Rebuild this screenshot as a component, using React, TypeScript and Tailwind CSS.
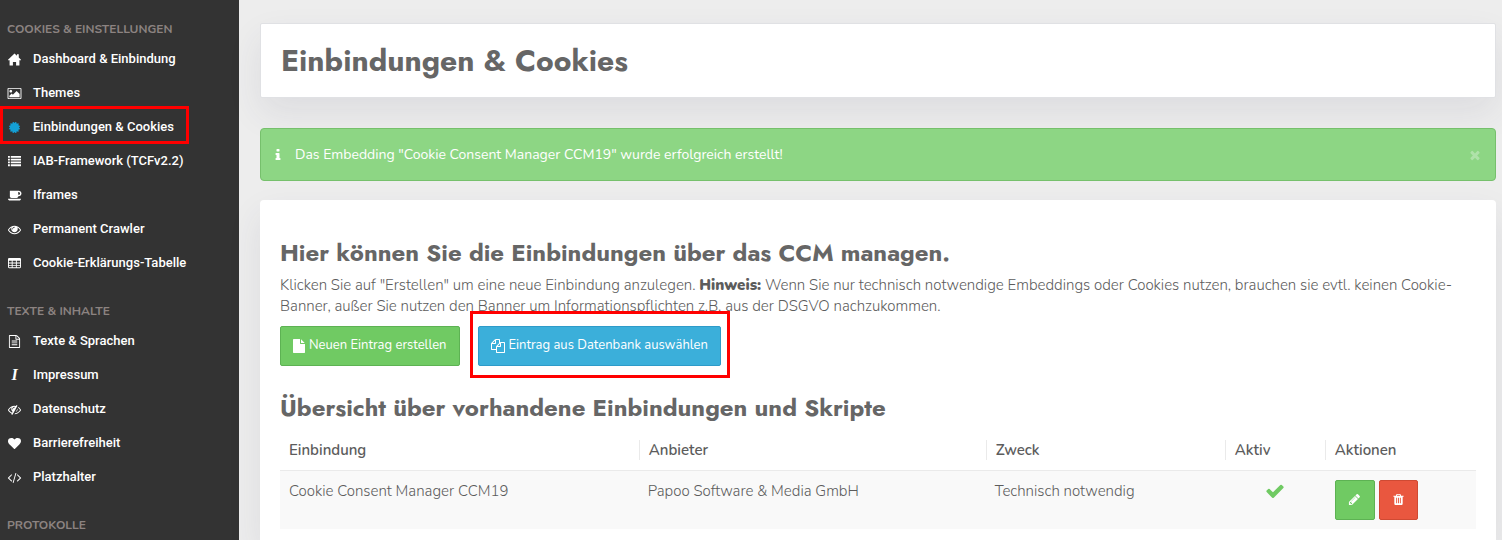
import type { ReactNode } from "react";

const paths = {
    home: "M896 60l340 325v-205h250v445l306 291v90h-220v686q0 40-40 40h-416v-506h-440v506h-416q-40 0-40-40v-686h-220v-90z",
    picture: "M576 576q0 80-56 136t-136 56-136-56-56-136 56-136 136-56 136 56 56 136zm1024 384v448h-1408v-192l320-320 160 160 512-512zm96-704h-1600q-13 0-22.5 9.5t-9.5 22.5v1216q0 13 9.5 22.5t22.5 9.5h1600q13 0 22.5-9.5t9.5-22.5v-1216q0-13-9.5-22.5t-22.5-9.5zm160 32v1216q0 66-47 113t-113 47h-1600q-66 0-113-47t-47-113v-1216q0-66 47-113t113-47h1600q66 0 113 47t47 113z",
    certificate: "M1504 896l138 135q30 28 20 70-12 41-52 51l-188 48 53 186q12 41-19 70-29 31-70 19l-186-53-48 188q-10 40-51 52-12 2-19 2-31 0-51-22l-135-138-135 138q-28 30-70 20-41-11-51-52l-48-188-186 53q-41 12-70-19-31-29-19-70l53-186-188-48q-40-10-52-51-10-42 20-70l138-135-138-135q-30-28-20-70 12-41 52-51l188-48-53-186q-12-41 19-70 29-31 70-19l186 53 48-188q10-41 51-51 41-12 70 19l135 139 135-139q29-30 70-19 41 10 51 51l48 188 186-53q41-12 70 19 31 29 19 70l-53 186 188 48q40 10 52 51 10 42-20 70z",
    list: "M0 1280h256v256H0zM0 896h256v256H0zM0 512h256v256H0zM384 1280h1408v256H384zM0 128h256v256H0zM384 896h1408v256H384zM384 512h1408v256H384zM384 128h1408v256H384z",
    coffee: "M1664 608q0-80-56-136t-136-56h-64v384h64q80 0 136-56t56-136zm-1664 736h1792q0 106-75 181t-181 75h-1280q-106 0-181-75t-75-181zm1856-736q0 159-112.5 271.5t-271.5 112.5h-64v32q0 92-66 158t-158 66h-704q-92 0-158-66t-66-158v-736q0-26 19-45t45-19h1152q159 0 271.5 112.5t112.5 271.5z",
    eye: "M1664 960q-152-236-381-353 61 104 61 225 0 185-131.5 316.5t-316.5 131.5-316.5-131.5-131.5-316.5q0-121 61-225-229 117-381 353 133 205 333.5 326.5t434.5 121.5 434.5-121.5 333.5-326.5zm-720-384q0-20-14-34t-34-14q-125 0-214.5 89.5t-89.5 214.5q0 20 14 34t34 14 34-14 14-34q0-86 61-147t147-61q20 0 34-14t14-34zm848 384q0 34-20 69-140 230-376.5 368.5t-499.5 138.5-499.5-139-376.5-368q-20-35-20-69t20-69q140-229 376.5-368t499.5-139 499.5 139 376.5 368q20 35 20 69z",
    eyeSlash: "M555 1335l78-141q-87-63-136-159t-49-203q0-121 61-225-229 117-381 353 167 258 427 375zm389-759q0-20-14-34t-34-14q-125 0-214.5 89.5t-89.5 214.5q0 20 14 34t34 14 34-14 14-34q0-86 61-147t147-61q20 0 34-14t14-34zm363-191q0 7-1 9-106 189-316 567t-315 566l-49 89q-10 16-28 16-12 0-134-70-16-10-16-28 0-12 44-87-143-65-263.500-173t-208.500-245q-20-31-20-69t20-69q153-235 380-371t496-136q89 0 180 17l54-97q10-16 28-16 5 0 18 6t31 15.500 33 18.500 31.500 18.500 19.500 11.500q16 10 16 27zm37 447q0 139-79 253.500t-209 164.500l280-502q8 45 8 84zm448 128q0 35-20 69-39 64-109 145-150 172-347.500 267t-419.500 95l74-132q212-18 392.500-137t301.500-307q-115-179-282-294l63-112q95 64 182.500 153t144.500 184q20 34 20 69z",
    table: "M160 128h1472q160 0 160 160v1088q0 160-160 160H160q-160 0-160-160V288q0-160 160-160zM128 512v256h384V512zm512 0v256h448V512zm576 0v256h448V512zM128 896v192h384V896zm512 0v192h448V896zm576 0v192h448V896zM128 1216v192h384v-192zm512 0v192h448v-192zm576 0v192h448v-192z",
    fileText: "M1596 380q28 28 48 76t20 88v1152q0 40-28 68t-68 28h-1344q-40 0-68-28t-28-68v-1600q0-40 28-68t68-28h896q40 0 88 20t76 48zm-444-244v376h376q-10-29-22-41l-313-313q-12-12-41-22zm384 1528v-1024h-416q-40 0-68-28t-28-68v-416h-768v1536h1280zm-1024-864q0-14 9-23t23-9h704q14 0 23 9t9 23v64q0 14-9 23t-23 9h-704q-14 0-23-9t-9-23v-64zm736 224q14 0 23 9t9 23v64q0 14-9 23t-23 9h-704q-14 0-23-9t-9-23v-64q0-14 9-23t23-9h704zm0 256q14 0 23 9t9 23v64q0 14-9 23t-23 9h-704q-14 0-23-9t-9-23v-64q0-14 9-23t23-9h704z",
    heart: "M896 1664q-26 0-44-18l-624-602q-10-8-27.500-26t-55.500-65.500-68-97.500-53.500-121-23.500-138q0-220 127-344t351-124q62 0 126.500 21.500t120 58 95.500 68.500 76 68q36-36 76-68t95.500-68.500 120-58 126.500-21.500q224 0 351 124t127 344q0 221-229 450l-623 600q-18 18-44 18z",
    code: "M553 1399l-50 50q-10 10-23 10t-23-10l-466-466q-10-10-10-23t10-23l466-466q10-10 23-10t23 10l50 50q10 10 10 23t-10 23l-393 393 393 393q10 10 10 23t-10 23zm591-1067l-373 1291q-4 13-15.500 19.500t-23.500 2.500l-62-17q-13-4-19.500-15.500t-2.500-24.500l373-1291q4-13 15.500-19.500t23.500-2.500l62 17q13 4 19.500 15.500t2.500 24.500zm657 651l-466 466q-10 10-23 10t-23-10l-50-50q-10-10-10-23t10-23l393-393-393-393q-10-10-10-23t10-23l50-50q10-10 23-10t23 10l466 466q10 10 10 23t-10 23z",
    info: "M1216 1344v128q0 26-19 45t-45 19h-512q-26 0-45-19t-19-45v-128q0-26 19-45t45-19h64v-384h-64q-26 0-45-19t-19-45v-128q0-26 19-45t45-19h384q26 0 45 19t19 45v576h64q26 0 45 19t19 45zm-128-1152v192q0 26-19 45t-45 19h-256q-26 0-45-19t-19-45v-192q0-26 19-45t45-19h256q26 0 45 19t19 45z",
    times: "M1490 1322q0 40-28 68l-136 136q-28 28-68 28t-68-28l-294-294-294 294q-28 28-68 28t-68-28l-136-136q-28-28-28-68t28-68l294-294-294-294q-28-28-28-68t28-68l136-136q28-28 68-28t68 28l294 294 294-294q28-28 68-28t68 28l136 136q28 28 28 68t-28 68l-294 294 294 294q28 28 28 68z",
    file: "M1152 512v-472q22 14 36 28l408 408q14 14 28 36h-472zm-128 32q0 40 28 68t68 28h544v1056q0 40-28 68t-68 28h-1344q-40 0-68-28t-28-68v-1600q0-40 28-68t68-28h800v544z",
    files: "M1696 384q40 0 68 28t28 68v1216q0 40-28 68t-68 28h-960q-40 0-68-28t-28-68v-288h-544q-40 0-68-28t-28-68v-672q0-40 20-88t48-76l408-408q28-28 76-48t88-20h416q40 0 68 28t28 68v328q68-40 128-40h416zm-544 213l-299 299h299v-299zm-640-384l-299 299h299v-299zm196 647l316-316v-416h-384v416q0 40-28 68t-68 28h-416v640h512v-256q0-40 20-88t48-76zm956 804v-1152h-384v416q0 40-28 68t-68 28h-416v640h896z",
    check: "M1671 566q0 40-28 68l-724 724-136 136q-28 28-68 28t-68-28l-136-136-362-362q-28-28-28-68t28-68l136-136q28-28 68-28t68 28l294 295 656-657q28-28 68-28t68 28l136 136q28 28 28 68z",
    pencil: "M491 1536l91-91-235-235-91 91v107h128v128h107zm523-928q0-22-22-22-10 0-17 7l-542 542q-7 7-7 17 0 22 22 22 10 0 17-7l542-542q7-7 7-17zm-54-192l416 416-832 832h-416v-416zm683 96q0 53-37 90l-166 166-416-416 166-165q36-38 90-38 53 0 91 38l235 234q37 39 37 91z",
    trash: "M704 1376v-704q0-14-9-23t-23-9h-64q-14 0-23 9t-9 23v704q0 14 9 23t23 9h64q14 0 23-9t9-23zm256 0v-704q0-14-9-23t-23-9h-64q-14 0-23 9t-9 23v704q0 14 9 23t23 9h64q14 0 23-9t9-23zm256 0v-704q0-14-9-23t-23-9h-64q-14 0-23 9t-9 23v704q0 14 9 23t23 9h64q14 0 23-9t9-23zm-544-992h448l-48-117q-7-9-17-11h-317q-10 2-17 11zm928 32v64q0 14-9 23t-23 9h-96v948q0 83-47 143.500t-113 60.500h-832q-66 0-113-58.500t-47-141.500v-952h-96q-14 0-23-9t-9-23v-64q0-14 9-23t23-9h309l70-167q15-37 54-63t79-26h320q40 0 79 26t54 63l70 167h309q14 0 23 9t9 23z",
};

type IconName = keyof typeof paths;

type NavItem = {
    label: string;
    icon: IconName | "italic";
    active?: boolean;
};

const groups: { title: string; items: NavItem[] }[] = [
    {
        title: "Cookies & Einstellungen",
        items: [
            { label: "Dashboard & Einbindung", icon: "home" },
            { label: "Themes", icon: "picture" },
            { label: "Einbindungen & Cookies", icon: "certificate", active: true },
            { label: "IAB-Framework (TCFv2.2)", icon: "list" },
            { label: "Iframes", icon: "coffee" },
            { label: "Permanent Crawler", icon: "eye" },
            { label: "Cookie-Erklärungs-Tabelle", icon: "table" },
        ],
    },
    {
        title: "Texte & Inhalte",
        items: [
            { label: "Texte & Sprachen", icon: "fileText" },
            { label: "Impressum", icon: "italic" },
            { label: "Datenschutz", icon: "eyeSlash" },
            { label: "Barrierefreiheit", icon: "heart" },
            { label: "Platzhalter", icon: "code" },
        ],
    },
    { title: "Protokolle", items: [] },
];

export default function App() {
    return (
        <div className="flex min-h-screen bg-[#ededed] font-['Nunito','Open_Sans',sans-serif] text-[15px] font-light text-[#5c5c5c]">
            <Sidebar />

            <main className="flex min-w-0 flex-1 flex-col pt-[23px] pr-1.5 pl-[21px]">
                <header className="rounded-xs border border-[#e0e1e4] bg-white px-5 py-4 shadow-[0_15px_35px_rgba(50,50,93,0.09)]">
                    <Title as="h1">Einbindungen &amp; Cookies</Title>
                </header>

                <div
                    role="alert"
                    className="mt-[30px] flex h-[53px] items-center rounded-sm border border-[#76c06c] bg-[#8dd684] px-2.5 text-white"
                >
                    <Icon name="info" className="size-3.5" />
                    <p className="ml-2.5 flex-1 text-sm font-normal">
                        Das Embedding "Cookie Consent Manager CCM19" wurde
                        erfolgreich erstellt!
                    </p>
                    <button
                        type="button"
                        aria-label="Schließen"
                        className="cursor-pointer p-[3px] opacity-30"
                    >
                        <Icon name="times" className="size-3.5" />
                    </button>
                </div>

                <section className="mt-[19px] flex-1 rounded-t-sm bg-white px-5 pt-[35px] shadow-[0_15px_35px_rgba(50,50,93,0.09)]">
                    <Title as="h2">
                        Hier können Sie die Einbindungen über das CCM managen.
                    </Title>
                    <p className="mt-1 leading-[21px]">
                        Klicken Sie auf "Erstellen" um eine neue Einbindung
                        anzulegen. <b className="font-black">Hinweis:</b> Wenn
                        Sie nur technisch notwendige Embeddings oder Cookies
                        nutzen, brauchen sie evtl. keinen Cookie-Banner, außer
                        Sie nutzen den Banner um Informationspflichten z.B. aus
                        der DSGVO nachzukommen.
                    </p>

                    <div className="mt-[9px] flex gap-[18px]">
                        <button
                            type="button"
                            className="flex h-10 cursor-pointer items-center gap-1 rounded-xs border border-[#5db253] bg-[#70ca63] px-3 text-[13px] font-normal text-white"
                        >
                            <Icon name="file" className="h-3.5 w-3" />
                            Neuen Eintrag erstellen
                        </button>
                        <div className="relative">
                            <button
                                type="button"
                                className="flex h-10 cursor-pointer items-center gap-1 rounded-xs border border-[#2e9bc9] bg-[#3bafda] px-3 text-[13px] font-normal text-white"
                            >
                                <Icon name="files" className="size-3.5" />
                                Eintrag aus Datenbank auswählen
                            </button>
                            <span className="pointer-events-none absolute -top-[15px] -right-[9px] -bottom-3 -left-2 border-3 border-[#f00]" />
                        </div>
                    </div>

                    <div className="mt-6">
                        <Title as="h2">
                            Übersicht über vorhandene Einbindungen und Skripte
                        </Title>
                    </div>
                    <EmbeddingTable />
                </section>
            </main>
        </div>
    );
}

const Sidebar = () => {
    return (
        <nav className="w-[239px] shrink-0 bg-[#333] pt-4">
            {groups.map((group) => (
                <div key={group.title} className="mb-[18px] last:mb-0">
                    <h3 className="flex h-[26px] items-center pl-[7px] text-xs font-bold text-[#8c8381] uppercase">
                        {group.title}
                    </h3>
                    <ul>
                        {group.items.map((item) => (
                            <li key={item.label} className="relative">
                                <a
                                    href="#"
                                    className="flex h-[34px] items-center gap-[11px] pl-[7px] font-['Roboto',sans-serif] text-[13px] font-medium text-white"
                                >
                                    <span
                                        className={`flex w-[15px] justify-center ${
                                            item.active ? "text-[#149fd5]" : ""
                                        }`}
                                    >
                                        {item.icon == "italic" ? (
                                            <i className="font-['Liberation_Serif',serif] text-base font-bold">
                                                I
                                            </i>
                                        ) : (
                                            <Icon
                                                name={item.icon}
                                                className="mt-px size-[13px]"
                                            />
                                        )}
                                    </span>
                                    {item.label}
                                </a>
                                {item.active && (
                                    <span className="pointer-events-none absolute -top-1 left-0 h-[38px] w-[189px] border-3 border-[#f00]" />
                                )}
                            </li>
                        ))}
                    </ul>
                </div>
            ))}
        </nav>
    );
};

const EmbeddingTable = () => {
    return (
        <table className="mt-1 w-full table-fixed text-left leading-5">
            <thead>
                <tr className="h-10 border-b border-[#eaeaea]">
                    <HeadCell className="w-[30%]">Einbindung</HeadCell>
                    <HeadCell className="w-[29%]">Anbieter</HeadCell>
                    <HeadCell className="w-[20%]">Zweck</HeadCell>
                    <HeadCell className="w-[100px]">Aktiv</HeadCell>
                    <HeadCell>Aktionen</HeadCell>
                </tr>
            </thead>
            <tbody>
                <tr className="bg-[#f9f9f9] align-top">
                    <td className="px-[9px] py-2.5">
                        Cookie Consent Manager CCM19
                    </td>
                    <td className="px-[9px] py-2.5">
                        Papoo Software &amp; Media GmbH
                    </td>
                    <td className="px-[9px] py-2.5">Technisch notwendig</td>
                    <td className="px-[9px] py-2.5">
                        <Icon
                            name="check"
                            className="mx-auto size-5 text-[#70ca63]"
                        />
                    </td>
                    <td className="px-2.5 py-[9px]">
                        <div className="flex gap-1">
                            <button
                                type="button"
                                aria-label="Bearbeiten"
                                className="flex size-10 cursor-pointer items-center justify-center rounded-xs border border-[#5db253] bg-[#70ca63] text-white"
                            >
                                <Icon name="pencil" className="size-[13px]" />
                            </button>
                            <button
                                type="button"
                                aria-label="Löschen"
                                className="flex h-10 w-[39px] cursor-pointer items-center justify-center rounded-xs border border-[#cf4a33] bg-[#e9573f] text-white"
                            >
                                <Icon name="trash" className="size-[13px]" />
                            </button>
                        </div>
                    </td>
                </tr>
            </tbody>
        </table>
    );
};

type HeadCellProps = {
    className?: string;
    children: ReactNode;
};

const HeadCell = ({ className, children }: HeadCellProps) => {
    return (
        <th className={`group p-0 font-semibold ${className ?? ""}`}>
            <div className="border-l border-[#eaeaea] pl-[9px] group-first:border-l-0">
                {children}
            </div>
        </th>
    );
};

type TitleProps = {
    as: "h1" | "h2";
    children: ReactNode;
};

const Title = ({ as: Tag, children }: TitleProps) => {
    return (
        <Tag
            className={`font-['Jost','Lato',sans-serif] font-bold text-[#666] ${
                Tag == "h1" ? "text-3xl leading-[41px]" : "text-2xl leading-9"
            }`}
        >
            {children}
        </Tag>
    );
};

type IconProps = {
    name: IconName;
    className?: string;
};

const Icon = ({ name, className }: IconProps) => {
    return (
        <svg
            viewBox={name == "file" ? "128 0 1536 1792" : "0 0 1792 1792"}
            fill="currentColor"
            fillRule={name == "table" ? "evenodd" : "nonzero"}
            className={`shrink-0 overflow-visible ${className ?? ""}`}
            aria-hidden="true"
        >
            <path d={paths[name]} />
        </svg>
    );
};
